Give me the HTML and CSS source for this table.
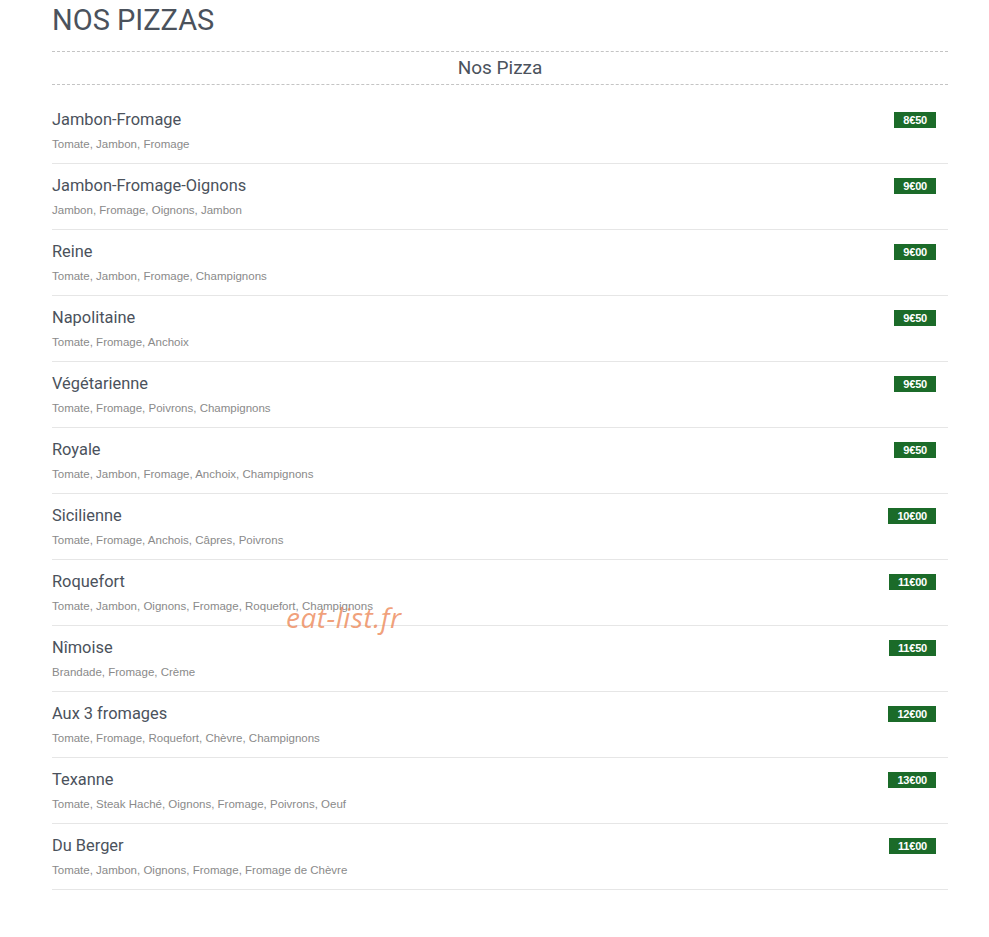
FILE: index.html
```html
<!DOCTYPE html>
<html lang="fr">
<head>
<meta charset="utf-8">
<title>Nos Pizzas</title>
<link rel="stylesheet" href="styles.css">
</head>
<body>
<div class="page">
  <h1 class="title">NOS PIZZAS</h1>
  <div class="section-head">Nos Pizza</div>
  <ul class="menu">
    <li class="item"><div class="info"><div class="name">Jambon-Fromage</div><div class="desc">Tomate, Jambon, Fromage</div></div><span class="price">8€50</span></li>
    <li class="item"><div class="info"><div class="name">Jambon-Fromage-Oignons</div><div class="desc">Jambon, Fromage, Oignons, Jambon</div></div><span class="price">9€00</span></li>
    <li class="item"><div class="info"><div class="name">Reine</div><div class="desc">Tomate, Jambon, Fromage, Champignons</div></div><span class="price">9€00</span></li>
    <li class="item"><div class="info"><div class="name">Napolitaine</div><div class="desc">Tomate, Fromage, Anchoix</div></div><span class="price">9€50</span></li>
    <li class="item"><div class="info"><div class="name">Végétarienne</div><div class="desc">Tomate, Fromage, Poivrons, Champignons</div></div><span class="price">9€50</span></li>
    <li class="item"><div class="info"><div class="name">Royale</div><div class="desc">Tomate, Jambon, Fromage, Anchoix, Champignons</div></div><span class="price">9€50</span></li>
    <li class="item"><div class="info"><div class="name">Sicilienne</div><div class="desc">Tomate, Fromage, Anchois, Câpres, Poivrons</div></div><span class="price">10€00</span></li>
    <li class="item"><div class="info"><div class="name">Roquefort</div><div class="desc">Tomate, Jambon, Oignons, Fromage, Roquefort, Champignons</div></div><span class="price">11€00</span></li>
    <li class="item"><div class="info"><div class="name">Nîmoise</div><div class="desc">Brandade, Fromage, Crème</div></div><span class="price">11€50</span></li>
    <li class="item"><div class="info"><div class="name">Aux 3 fromages</div><div class="desc">Tomate, Fromage, Roquefort, Chèvre, Champignons</div></div><span class="price">12€00</span></li>
    <li class="item"><div class="info"><div class="name">Texanne</div><div class="desc">Tomate, Steak Haché, Oignons, Fromage, Poivrons, Oeuf</div></div><span class="price">13€00</span></li>
    <li class="item"><div class="info"><div class="name">Du Berger</div><div class="desc">Tomate, Jambon, Oignons, Fromage, Fromage de Chèvre</div></div><span class="price">11€00</span></li>
  </ul>
  <div class="watermark">eat-list.fr</div>
</div>
</body>
</html>
```
FILE: styles.css
```css
* { box-sizing: border-box; }
html, body { margin: 0; padding: 0; background: #fff; }
body { font-family: Roboto, "Liberation Sans", Arial, sans-serif; color: #4b525c; }
.page {
  position: relative;
  width: 896px;
  margin: 0 0 0 52px;
  padding-top: 4px;
}
.title {
  margin: 0;
  font-size: 29px;
  font-weight: 400;
  line-height: 32px;
  color: #4b525c;
}
.section-head {
  margin-top: 15px;
  border-top: 1px dashed #c4c4c4;
  border-bottom: 1px dashed #c4c4c4;
  text-align: center;
  font-size: 19px;
  line-height: 32px;
  color: #4b525c;
}
.menu {
  list-style: none;
  margin: 13px 0 0;
  padding: 0;
}
.item {
  display: flex;
  justify-content: space-between;
  align-items: flex-start;
  height: 66px;
  border-bottom: 1px solid #e6e6e6;
  padding: 12px 12px 0 0;
}
.name {
  font-size: 16.4px;
  line-height: 20px;
  color: #4b525c;
}
.desc {
  margin-top: 7px;
  font-family: "Liberation Sans", Arial, sans-serif;
  font-size: 11.5px;
  line-height: 14px;
  color: #8a8a8a;
}
.price {
  margin-top: 2px;
  background: #1b6b29;
  color: #fff;
  font-family: "Liberation Sans", Arial, sans-serif;
  font-weight: 700;
  font-size: 11px;
  line-height: 16px;
  padding: 0 9px;
  letter-spacing: -0.2px;
}
.watermark {
  position: absolute;
  left: 234px;
  top: 598px;
  font-family: "Open Sans", "DejaVu Sans", sans-serif;
  font-style: italic;
  font-size: 28px;
  color: rgba(236, 130, 80, 0.75);
  letter-spacing: 0.5px;
}
```
